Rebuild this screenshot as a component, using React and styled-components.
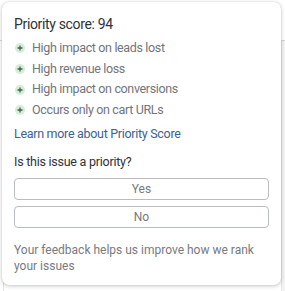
import React from "react";
import styled, { createGlobalStyle } from "styled-components";

const Global = createGlobalStyle`
  html, body { margin: 0; padding: 0; background: #ffffff; }
  body { font-family: Roboto, Inter, "Noto Sans", sans-serif; -webkit-font-smoothing: antialiased; }
  * { box-sizing: border-box; }
`;

const Page = styled.div`
  position: relative;
  width: 285px;
  height: 291px;
  overflow: hidden;
  background: #ffffff;
`;

const Backdrop = styled.div`
  display: flex;
  justify-content: space-between;
  height: 100%;
`;

const LeftEdge = styled.div`
  width: 4px;
  border-right: 1px solid #e4e4e4;
  margin-top: 40px;
  border-top: 1px solid #dcdcdc;
`;

const RightEdge = styled.div`
  width: 4px;
  background: #f3f3f3;
  border-left: 1px solid #e6e6e6;
  margin-top: 40px;
  border-top: 1px solid #d6d6d6;
`;

const Popover = styled.div`
  position: absolute;
  left: 2px;
  top: 2px;
  width: 279px;
  height: 283px;
  background: #ffffff;
  border-radius: 7px;
  box-shadow: 0 1px 4px rgba(0, 0, 0, 0.22), 0 0 1px rgba(0, 0, 0, 0.2);
  padding: 12px 12px 0 12px;
  display: flex;
  flex-direction: column;
`;

const Title = styled.div`
  font-size: 14px;
  line-height: 20px;
  letter-spacing: -0.35px;
  color: #2f3237;
  margin-bottom: 4px;
`;

const Reasons = styled.ul`
  list-style: none;
  margin: 0;
  padding: 0;
  display: flex;
  flex-direction: column;
`;

const Reason = styled.li`
  display: flex;
  align-items: center;
  gap: 7px;
  font-size: 12.5px;
  line-height: 20.7px;
  letter-spacing: -0.35px;
  color: #72757c;
`;

const Dot = styled.span`
  width: 10px;
  height: 10px;
  border-radius: 50%;
  background: #d3efd6;
  display: flex;
  align-items: center;
  justify-content: center;
  margin-left: 1px;
  flex: none;
`;

const PlusIcon = () => (
  <svg width="6" height="6" viewBox="0 0 6 6">
    <path d="M3 0.5v5M0.5 3h5" stroke="#4f5a52" strokeWidth="1.3" />
  </svg>
);

const LearnLink = styled.a`
  font-size: 12.5px;
  line-height: 20px;
  letter-spacing: -0.3px;
  color: #3b638d;
  text-decoration: none;
  margin-top: 3px;
  cursor: pointer;
`;

const Question = styled.div`
  font-size: 12.5px;
  line-height: 20px;
  letter-spacing: -0.25px;
  color: #2f3237;
  margin-top: 8px;
  margin-bottom: 6px;
`;

const Buttons = styled.div`
  display: flex;
  flex-direction: column;
  gap: 6px;
`;

const Choice = styled.button`
  height: 22px;
  border: 1px solid #b9bcc1;
  border-radius: 4px;
  background: #ffffff;
  font-family: inherit;
  font-size: 12px;
  color: #76797f;
  cursor: pointer;
`;

const Footnote = styled.p`
  margin: 14px 0 0 0;
  font-size: 12px;
  line-height: 16px;
  color: #777a80;
`;

const reasons = [
  "High impact on leads lost",
  "High revenue loss",
  "High impact on conversions",
  "Occurs only on cart URLs",
];

export default function App() {
  return (
    <Page>
      <Global />
      <Backdrop>
        <LeftEdge />
        <RightEdge />
      </Backdrop>
      <Popover>
        <Title>Priority score: 94</Title>
        <Reasons>
          {reasons.map((r) => (
            <Reason key={r}>
              <Dot>
                <PlusIcon />
              </Dot>
              {r}
            </Reason>
          ))}
        </Reasons>
        <LearnLink>Learn more about Priority Score</LearnLink>
        <Question>Is this issue a priority?</Question>
        <Buttons>
          <Choice>Yes</Choice>
          <Choice>No</Choice>
        </Buttons>
        <Footnote>Your feedback helps us improve how we rank your issues</Footnote>
      </Popover>
    </Page>
  );
}
